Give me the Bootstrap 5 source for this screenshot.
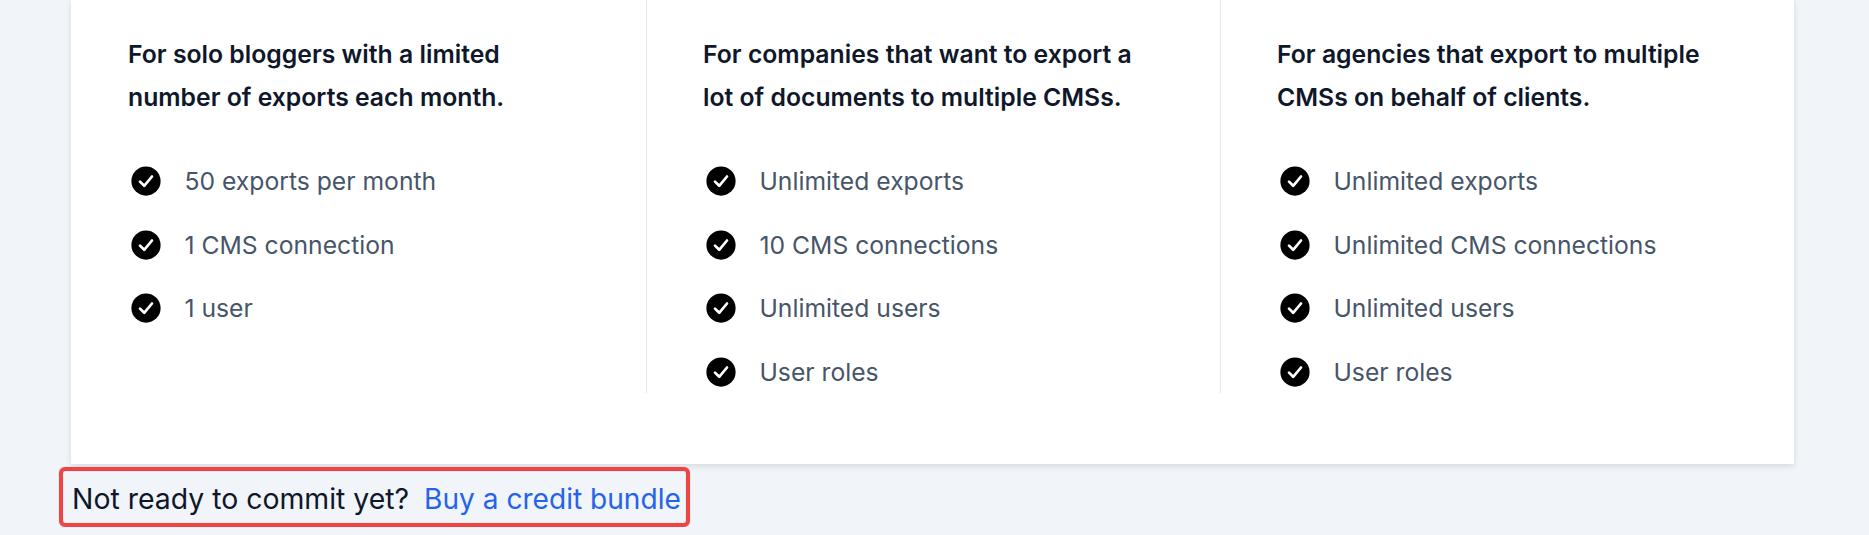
<!DOCTYPE html>
<html lang="en">
  <head>
    <meta charset="UTF-8" />
    <meta name="viewport" content="width=device-width, initial-scale=1.0" />
    <title>Pricing</title>
    <link
      href="https://cdn.jsdelivr.net/npm/bootstrap@5.3.0/dist/css/bootstrap.min.css"
      rel="stylesheet"
    />
    <style>
      body {
        background-color: #f1f5f9;
        font-family: Inter, "Liberation Sans", sans-serif;
        overflow: hidden;
      }
      .page-wrap {
        padding-left: 71px;
        padding-right: 75px;
      }
      .plan-card {
        background-color: #fff;
        padding-bottom: 71px;
        box-shadow: 0 2px 6px rgba(15, 23, 42, 0.12);
      }
      .plan-grid {
        display: grid;
        grid-template-columns: 575px 574px 574px;
      }
      .plan-col {
        padding: 33px 56px 0 57px;
        height: 393px;
      }
      .plan-col + .plan-col {
        padding-left: 56px;
        border-left: 1px solid #e2e8f0;
      }
      .plan-title {
        font-size: 24.75px;
        font-weight: 600;
        line-height: 43px;
        color: #0f172a;
        margin-bottom: 44px;
      }
      .plan-item {
        font-size: 24.7px;
        line-height: 36px;
        color: #475569;
        margin-bottom: 27.6px;
        gap: 20.5px;
      }
      .plan-item svg {
        width: 36px;
        height: 36px;
        flex-shrink: 0;
      }
      .credit-box {
        margin: 3px 0 0 59px;
        border: 4px solid #ef4444;
        border-radius: 6px;
        height: 60px;
        width: 631px;
        padding: 4px 0 0 9px;
        font-size: 28.4px;
        color: #0f172a;
        white-space: nowrap;
        gap: 15px;
        box-shadow: 0 0 1px rgba(71, 85, 105, 0.6), inset 0 0 1px rgba(71, 85, 105, 0.6);
      }
      .credit-box a {
        color: #2563eb;
        font-size: 28.1px;
        text-decoration: none;
      }
    </style>
  </head>
  <body>
    <div class="page-wrap">
      <div class="plan-card">
        <div class="plan-grid">
          <div class="plan-col">
            <div class="plan-title">For solo bloggers with a limited number of exports each month.</div>
            <ul class="list-unstyled m-0" id="soloList"></ul>
          </div>
          <div class="plan-col">
            <div class="plan-title">For companies that want to export a lot of documents to multiple CMSs.</div>
            <ul class="list-unstyled m-0" id="companyList"></ul>
          </div>
          <div class="plan-col">
            <div class="plan-title">For agencies that export to multiple CMSs on behalf of clients.</div>
            <ul class="list-unstyled m-0" id="agencyList"></ul>
          </div>
        </div>
      </div>
    </div>
    <div class="credit-box d-flex align-items-center">
      <span>Not ready to commit yet?</span>
      <a href="#">Buy a credit bundle</a>
    </div>

    <script src="https://cdn.jsdelivr.net/npm/bootstrap@5.3.0/dist/js/bootstrap.bundle.min.js"></script>
    <script>
      // Check icon used by every feature row
      const checkIcon = `
        <svg viewBox="0 0 24 24" aria-hidden="true">
          <circle cx="12" cy="12" r="9.75" fill="#000" />
          <path d="M8 12.4l2.8 2.8L16 9" fill="none" stroke="#fff" stroke-width="1.8" stroke-linecap="round" stroke-linejoin="round" />
        </svg>`;

      function fillList(id, items) {
        const list = document.getElementById(id);
        items.forEach((text) => {
          const li = document.createElement("li");
          li.className = "plan-item d-flex align-items-center";
          li.innerHTML = checkIcon + `<span>${text}</span>`;
          list.appendChild(li);
        });
      }

      fillList("soloList", ["50 exports per month", "1 CMS connection", "1 user"]);
      fillList("companyList", ["Unlimited exports", "10 CMS connections", "Unlimited users", "User roles"]);
      fillList("agencyList", ["Unlimited exports", "Unlimited CMS connections", "Unlimited users", "User roles"]);
    </script>
  </body>
</html>
